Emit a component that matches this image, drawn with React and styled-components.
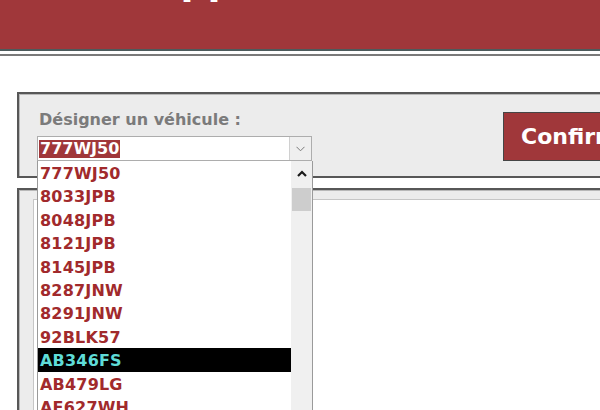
import styled, { createGlobalStyle } from 'styled-components';

const GlobalStyle = createGlobalStyle`
    html, body {
        margin: 0;
        padding: 0;
        background: #ffffff;
        overflow: hidden;
    }
    body {
        font-family: "DejaVu Sans", "Liberation Sans", sans-serif;
    }
`;

const Page = styled.div`
    width: 600px;
    height: 410px;
    overflow: hidden;
    background: #ffffff;
`;

const Header = styled.header`
    height: 49px;
    background-color: #a0373a;
    border-bottom: 2px solid #4d5b5c;
    overflow: hidden;
    padding-left: 151px;
`;

const Title = styled.h1`
    margin: -38px 0 0 0;
    font-size: 38px;
    line-height: 38px;
    font-weight: bold;
    color: #ffffff;
    white-space: nowrap;
`;

const Rule = styled.div`
    margin-top: 3px;
    height: 2px;
    background-color: #7a7a7a;
`;

const Panel = styled.section`
    margin-left: 17px;
    width: 700px;
    border: 2px solid #575757;
    border-right: none;
    background-color: #ececec;
    box-shadow: inset 1px 1px 0 #b8b8b8;
`;

const SelectPanel = styled(Panel)`
    margin-top: 36px;
    height: 66px;
    padding: 16px 0 0 18px;
    display: flex;
    align-items: flex-start;
`;

const Field = styled.div`
    position: relative;
    display: flex;
    flex-direction: column;
    width: 275px;
`;

const Label = styled.label`
    padding-left: 2px;
    font-size: 16px;
    line-height: 20px;
    font-weight: bold;
    color: #7b7b7b;
    white-space: nowrap;
`;

const Combo = styled.div`
    margin-top: 6px;
    height: 23px;
    border: 1px solid #adadad;
    background: #ffffff;
    display: flex;
    align-items: center;
    padding-left: 1px;
`;

const Selected = styled.span`
    background-color: #a0373a;
    color: #ffffff;
    font-size: 16px;
    font-weight: bold;
    line-height: 18px;
    padding: 0 1px;
`;

const ComboButton = styled.div`
    margin-left: auto;
    width: 21px;
    height: 23px;
    border-left: 1px solid #d0d0d0;
    background: #efefef;
    display: flex;
    align-items: center;
    justify-content: center;
`;

const Dropdown = styled.div`
    position: absolute;
    top: 51px;
    left: 0;
    width: 274px;
    height: 260px;
    border: 1px solid #9a9a9a;
    border-top: none;
    background: #ffffff;
    display: flex;
    overflow: hidden;
    z-index: 2;
`;

const Items = styled.ul`
    list-style: none;
    margin: 0;
    padding: 0;
    flex: 1;
`;

const Item = styled.li`
    height: 23.4px;
    line-height: 23.4px;
    padding: 1px 0 0 2px;
    box-sizing: border-box;
    font-size: 16px;
    font-weight: bold;
    color: ${p => (p.$active ? '#5fdcd8' : '#a12a2c')};
    background: ${p => (p.$active ? '#000000' : 'transparent')};
    letter-spacing: 0.2px;
`;

const Scrollbar = styled.div`
    width: 21px;
    background: #f0f0f0;
    display: flex;
    flex-direction: column;
    align-items: center;
`;

const ArrowUp = styled.div`
    height: 24px;
    width: 100%;
    display: flex;
    align-items: center;
    justify-content: center;
`;

const Thumb = styled.div`
    margin-top: 3px;
    width: 19px;
    height: 23px;
    background: #cdcdcd;
`;

const ConfirmButton = styled.button`
    margin: 2px 0 0 191px;
    width: 140px;
    height: 49px;
    border: 1px solid #454545;
    background-color: #a0373a;
    color: #ffffff;
    font-family: "DejaVu Sans", sans-serif;
    font-size: 22px;
    font-weight: bold;
    text-align: left;
    padding: 0 0 0 17px;
    flex-shrink: 0;
`;

const ResultPanel = styled(Panel)`
    margin-top: 10px;
    height: 240px;
    padding: 9px 0 0 14px;
`;

const Inner = styled.div`
    height: 100%;
    border: 1px solid #c6c6c6;
    border-right: none;
    background: #ffffff;
`;

const plates = [
    '777WJ50', '8033JPB', '8048JPB', '8121JPB', '8145JPB', '8287JNW',
    '8291JNW', '92BLK57', 'AB346FS', 'AB479LG', 'AF627WH', 'AG218KL',
];

export default () => {
    return (
        <Page>
            <GlobalStyle />
            <Header>
                <Title>Application</Title>
            </Header>
            <Rule />
            <SelectPanel>
                <Field>
                    <Label>Désigner un véhicule :</Label>
                    <Combo>
                        <Selected>777WJ50</Selected>
                        <ComboButton>
                            <svg width="9" height="6" viewBox="0 0 9 6">
                                <path d="M0.5 0.8 L4.5 4.8 L8.5 0.8" fill="none" stroke="#7a7a7a" strokeWidth="1" />
                            </svg>
                        </ComboButton>
                    </Combo>
                    <Dropdown>
                        <Items>
                            {plates.map(p => (
                                <Item key={p} $active={p === 'AB346FS'}>{p}</Item>
                            ))}
                        </Items>
                        <Scrollbar>
                            <ArrowUp>
                                <svg width="10" height="7" viewBox="0 0 10 7">
                                    <path d="M1 6 L5 2 L9 6" fill="none" stroke="#1a1a1a" strokeWidth="2.2" />
                                </svg>
                            </ArrowUp>
                            <Thumb />
                        </Scrollbar>
                    </Dropdown>
                </Field>
                <ConfirmButton>Confirmer</ConfirmButton>
            </SelectPanel>
            <ResultPanel>
                <Inner />
            </ResultPanel>
        </Page>
    )
}
